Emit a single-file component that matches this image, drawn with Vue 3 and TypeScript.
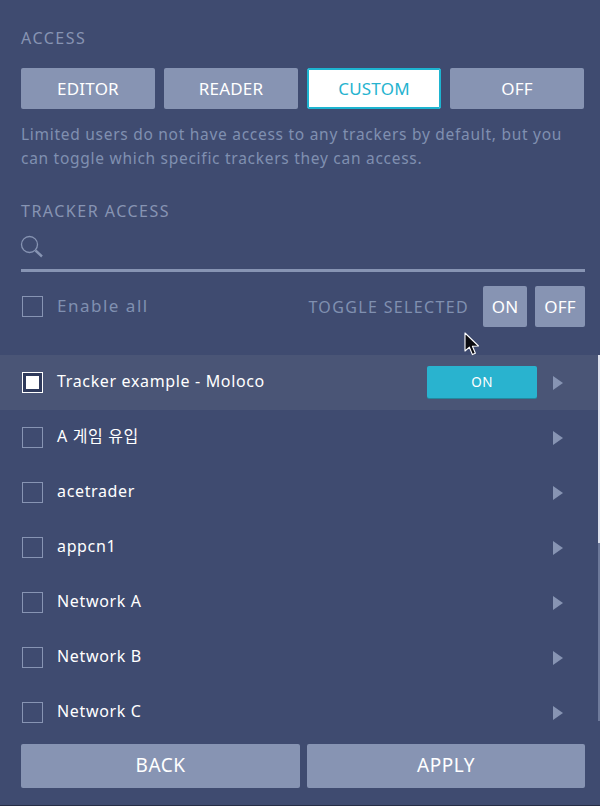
<script setup lang="ts">
import { ref } from 'vue'

interface Tracker {
  name: string
  selected?: boolean
}

const accessOptions = ['EDITOR', 'READER', 'CUSTOM', 'OFF']
const access = ref('CUSTOM')

const trackers: Tracker[] = [
  { name: 'Tracker example - Moloco', selected: true },
  { name: 'A 게임 유입' },
  { name: 'acetrader' },
  { name: 'appcn1' },
  { name: 'Network A' },
  { name: 'Network B' },
  { name: 'Network C' },
]
</script>

<template>
  <div class="panel">
    <section class="access">
      <h4 class="label">ACCESS</h4>
      <div class="access-options">
        <button
          v-for="option in accessOptions"
          :key="option"
          class="btn"
          :class="{ active: access === option }"
          @click="access = option"
        >
          {{ option }}
        </button>
      </div>
      <p class="hint">
        Limited users do not have access to any trackers by default, but you can toggle which specific trackers they can access.
      </p>
    </section>

    <section class="tracker-access">
      <h4 class="label">TRACKER ACCESS</h4>
      <div class="search">
        <svg class="search-icon" width="24" height="24" viewBox="0 0 24 24" fill="none" stroke="#8794b3">
          <circle cx="9.5" cy="9.5" r="8" stroke-width="1.3" />
          <path d="M15.5 15.5 L22 21.5" stroke-width="2.4" />
        </svg>
      </div>
      <div class="toolbar">
        <label class="enable-all">
          <span class="checkbox"></span>
          <span class="enable-text">Enable all</span>
        </label>
        <div class="toggle-selected">
          <span class="toggle-label">TOGGLE SELECTED</span>
          <button class="btn small on">ON</button>
          <button class="btn small off">OFF</button>
        </div>
      </div>
    </section>

    <div class="list">
      <div v-for="tracker in trackers" :key="tracker.name" class="row" :class="{ selected: tracker.selected }">
        <span class="checkbox" :class="{ checked: tracker.selected }"></span>
        <span class="row-name">{{ tracker.name }}</span>
        <button v-if="tracker.selected" class="row-toggle">ON</button>
        <span class="arrow"></span>
      </div>
      <div class="scrollbar"><div class="thumb"></div></div>
    </div>

    <div class="footer">
      <button class="btn">BACK</button>
      <button class="btn">APPLY</button>
    </div>

    <svg class="cursor" width="18" height="26" viewBox="0 0 18 26">
      <path d="M1 1 L1 19 L5.4 15.2 L8.4 22.6 L11.4 21.3 L8.4 14.2 L14.5 14 Z" fill="#0b0b10" stroke="#fff" stroke-width="1.1" stroke-linejoin="round" />
    </svg>
  </div>
</template>

<style>
html,
body {
  margin: 0;
  background: #3f4b70;
}
</style>

<style scoped>
.panel {
  position: relative;
  width: 600px;
  height: 806px;
  box-sizing: border-box;
  overflow: hidden;
  background: #3f4b70;
  border-bottom: 1px solid #262d45;
  font-family: 'Noto Sans', 'Noto Sans CJK KR', sans-serif;
  color: #fff;
}

.label {
  margin: 0;
  font-size: 16px;
  font-weight: 400;
  line-height: 22px;
  letter-spacing: 1.5px;
  color: #8794b3;
}

.access {
  padding: 27px 15px 0 21px;
}

.access-options {
  display: grid;
  grid-template-columns: repeat(4, 134px);
  gap: 9px;
  margin-top: 19px;
}

.btn {
  height: 41px;
  padding: 0;
  border: none;
  border-radius: 2px;
  background: #8794b3;
  color: #fff;
  font-family: inherit;
  font-size: 17px;
  letter-spacing: 0.2px;
  cursor: pointer;
}

.btn.active {
  background: #fff;
  border: 1px solid #1db4d0;
  box-shadow: inset 0 0 0 1px #1db4d0;
  color: #26b3cf;
}

.hint {
  margin: 13px 0 0;
  font-size: 15.5px;
  line-height: 24px;
  letter-spacing: 0.72px;
  color: #8090b0;
}

.tracker-access {
  padding: 30px 15px 0 21px;
}

.search {
  display: flex;
  align-items: flex-end;
  height: 48px;
  box-sizing: border-box;
  border-bottom: 3px solid #8794b3;
  margin-top: 2px;
  padding-bottom: 10px;
}

.search-icon {
  margin-left: -1px;
}

.toolbar {
  display: flex;
  align-items: center;
  justify-content: space-between;
  margin-top: 14px;
  height: 41px;
}

.enable-all {
  display: flex;
  align-items: center;
  gap: 14px;
  padding-left: 1px;
  font-size: 17px;
  letter-spacing: 1.5px;
  color: #8090b0;
}

.enable-text {
  position: relative;
  top: -1px;
}

.toggle-selected {
  display: flex;
  align-items: center;
}

.toggle-label {
  margin-right: 14px;
  font-size: 16px;
  letter-spacing: 1.35px;
  color: #8090b0;
}

.btn.on {
  width: 44px;
  margin-right: 8px;
}

.btn.off {
  width: 50px;
}

.checkbox {
  flex: none;
  box-sizing: border-box;
  width: 21px;
  height: 21px;
  border: 1px solid #8794b3;
}

.checkbox.checked {
  border: 1px solid #fff;
  background: #fff;
  box-shadow: inset 0 0 0 3px #2f3a5c;
}

.list {
  position: relative;
  height: 380px;
  margin-top: 28px;
  overflow: hidden;
}

.row {
  display: flex;
  align-items: center;
  height: 55px;
  box-sizing: border-box;
  padding: 0 37px 0 22px;
}

.row.selected {
  background: #4a5576;
}

.row-name {
  flex: 1;
  margin-left: 14px;
  font-size: 16px;
  letter-spacing: 0.65px;
  line-height: 22px;
  position: relative;
  top: -2px;
}

.row-toggle {
  width: 110px;
  height: 32px;
  margin: -2px 16px 0 0;
  border: none;
  border-radius: 2px;
  background: #29b3cf;
  box-shadow: 0 1px 0 #23899f;
  color: #fff;
  font-family: inherit;
  font-size: 13.5px;
  letter-spacing: 0.3px;
}

.arrow {
  width: 0;
  height: 0;
  border-top: 7px solid transparent;
  border-bottom: 7px solid transparent;
  border-left: 10px solid #8794b3;
}

.scrollbar {
  position: absolute;
  top: 0;
  right: 0;
  bottom: 14px;
  width: 2px;
  background: #6e7a9b;
}

.thumb {
  height: 188px;
  background: #dfe3ee;
}

.footer {
  display: grid;
  grid-template-columns: 279px 278px;
  gap: 7px;
  padding: 9px 15px 0 21px;
}

.footer .btn {
  height: 44px;
  font-size: 19px;
  letter-spacing: 0.5px;
  line-height: 40px;
  padding-bottom: 2px;
}

.cursor {
  position: absolute;
  left: 464px;
  top: 332px;
}
</style>
